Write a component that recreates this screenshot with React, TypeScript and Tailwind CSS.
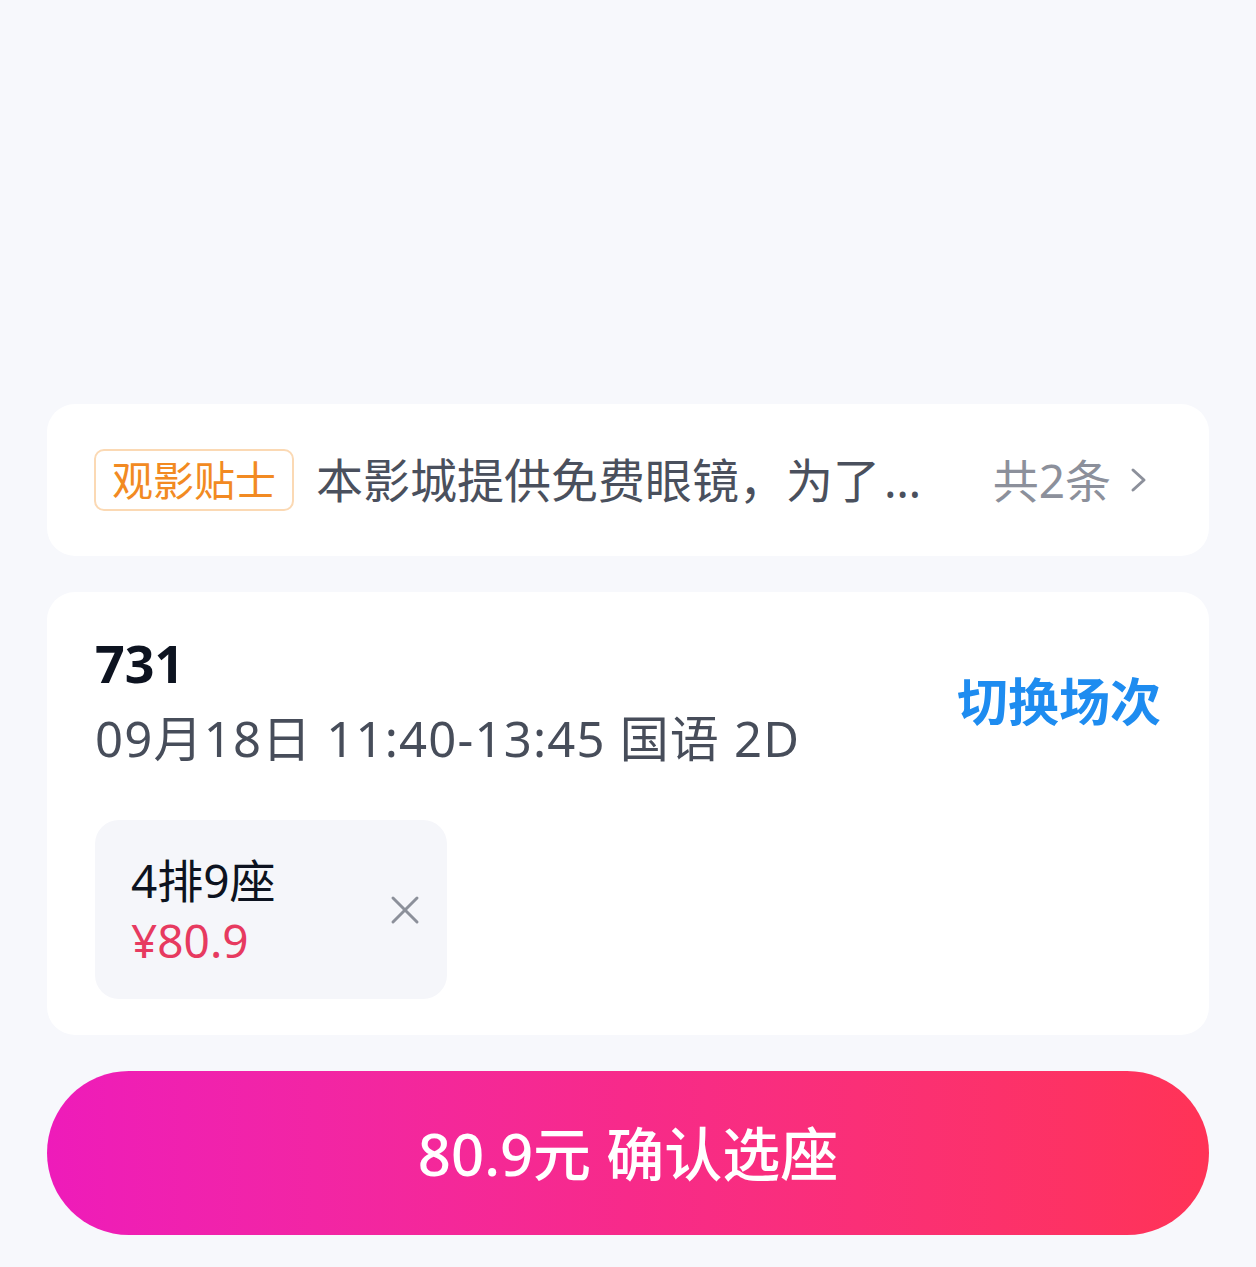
import React from 'react';
import { X } from 'lucide-react';

const font = { fontFamily: '"Noto Sans", "Noto Sans CJK SC", sans-serif' };

const App: React.FC = () => {
    return (
        <div style={font} className="min-h-[1267px] w-full bg-[#f7f8fc] px-[47px] pt-[404px] pb-[32px]">
            {/* Tips bar */}
            <div className="h-[152px] bg-white rounded-[28px] flex items-center pl-[47px] pr-[58px]">
                <span className="shrink-0 h-[62px] px-[16px] flex items-center rounded-[10px] border-2 border-[#fbd9b4] text-[#f28a22] text-[41px] leading-none">
                    观影贴士
                </span>
                <span className="ml-[22px] whitespace-nowrap text-[47px] text-[#4a505d] leading-[62px]">
                    本影城提供免费眼镜，为了<span className="ml-[4px] tracking-[3px]">…</span>
                </span>
                <span className="ml-auto flex items-center text-[46px] text-[#8c909b] leading-[62px]">
                    共2条
                    <svg width="24" height="30" viewBox="0 0 24 30" className="ml-[16px]">
                        <path d="M6 5 L17 15 L6 25" fill="none" stroke="#8c909b" strokeWidth="3" strokeLinecap="round" strokeLinejoin="round" />
                    </svg>
                </span>
            </div>

            {/* Session card */}
            <div className="mt-[36px] bg-white rounded-[28px] pt-[40px] pb-[36px] px-[48px]">
                <div className="flex items-center justify-between">
                    <div>
                        <div className="text-[52px] font-bold text-[#0d1320] leading-[62px]">731</div>
                        <div className="mt-[13px] text-[49px] tracking-[1.2px] text-[#474d5a] leading-[62px]">09月18日 11:40-13:45 国语 2D</div>
                    </div>
                    <button className="text-[51px] font-bold text-[#1e8cf0] leading-[62px]">切换场次</button>
                </div>

                <div className="mt-[51px] w-[352px] h-[179px] bg-[#f5f6fa] rounded-[24px] flex items-center pl-[36px] pr-[18px]">
                    <div className="flex-1">
                        <div className="text-[46px] text-[#0d1320] leading-[60px]">4排9座</div>
                        <div className="text-[46px] text-[#e73a60] leading-[60px]">¥80.9</div>
                    </div>
                    <X size={48} strokeWidth={1.5} className="text-[#8c909a]" />
                </div>
            </div>

            {/* Confirm button */}
            <button className="mt-[36px] w-full h-[164px] rounded-full bg-gradient-to-r from-[#ee1bba] via-[#f72a8a] to-[#ff3356] text-white text-[58px] font-medium">
                80.9元 确认选座
            </button>
        </div>
    );
};

export default App;
